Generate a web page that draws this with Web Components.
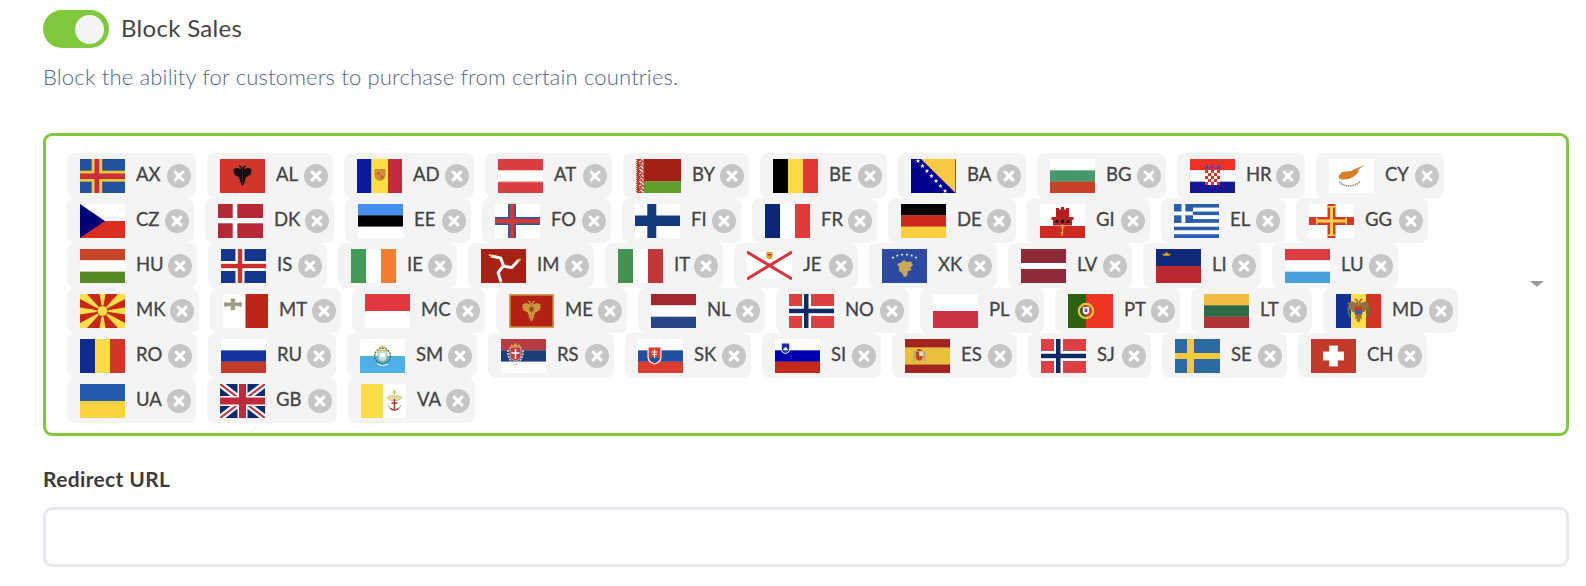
<!DOCTYPE html>
<html>
<head>
<meta charset="utf-8">
<title>Block Sales</title>
<style>
  html, body { margin: 0; background: #fff; font-family: Lato, "Liberation Sans", sans-serif; }
</style>
</head>
<body>
<block-sales-form></block-sales-form>

<script>
const rect = (x, y, w, h, c) => `<rect x="${x}" y="${y}" width="${w}" height="${h}" fill="${c}"/>`;
const hs = (...c) => c.map((k, i) => rect(0, i * 34 / c.length, 45, 34 / c.length + .2, k)).join('');
const vs = (...c) => c.map((k, i) => rect(i * 45 / c.length, 0, 45 / c.length + .2, 34, k)).join('');
const cross = (x, w, y, h, c) => rect(x, 0, w, 34, c) + rect(0, y, 45, h, c);
const star = (x, y, r, c = '#fff') => {
    let p = [];
    for (let i = 0; i < 10; i++) {
        const a = -Math.PI / 2 + i * Math.PI / 5, q = i % 2 ? r * .42 : r;
        p.push((x + q * Math.cos(a)).toFixed(2) + ',' + (y + q * Math.sin(a)).toFixed(2));
    }
    return `<polygon points="${p.join(' ')}" fill="${c}"/>`;
};
const nordicRed = rect(0, 0, 45, 34, '#dc4043') + cross(13, 9, 12, 10, '#fff') + cross(15, 4.5, 14.7, 4.5, '#0d2a66');

const checkers = () => {
    let s = rect(15, 11, 15, 15, '#fff');
    for (let r = 0; r < 5; r++) for (let c = 0; c < 5; c++) if ((r + c) % 2 === 0) s += rect(15 + c * 3, 11 + r * 3, 3, 3, '#e3312a');
    return s;
};
const leg = a => `<g transform="rotate(${a} 22.5 17)"><path d="M22.5 17 Q21 12 19.5 9 Q15 8 10 7" fill="none" stroke="#fff" stroke-width="3" stroke-linejoin="round"/><path d="M10.5 7 L8 5.6" stroke="#e8c44a" stroke-width="2"/></g>`;
// two-headed eagle, used for AL, ME and MD. One half, mirrored.
const eagleHalf = 'M0-7 L-1-9.5 L-3-10.5 L-3.6-9 L-2.2-8.5 L-1.6-6.5 L-3-7 L-5.5-8 L-9.5-6.5 L-8.5-5.2 L-9.5-4 L-8.3-3 L-9.2-1.8 L-7.5-1 L-8 0 L-5.8 0 L-5.5 1 L-3.5 1.5 L-3.3 3.5 L-2.4 4.5 L-3.2 7.5 L-1.6 6.5 L-1.6 9 L0 10.5Z';
const eagle = (c, x = 22.5, y = 17, k = 1) => `<g transform="translate(${x} ${y}) scale(${k})" fill="${c}"><path d="${eagleHalf}"/><path d="${eagleHalf}" transform="scale(-1 1)"/></g>`;
const shield = (x, y, w, h, c, stroke = 'none') => `<path d="M${x} ${y}h${w}v${h * .6}q0 ${h * .3} -${w / 2} ${h * .4}q-${w / 2} -${h * .1} -${w / 2} -${h * .4}z" fill="${c}" stroke="${stroke}" stroke-width=".8"/>`;

const FLAGS = {
    AX: rect(0, 0, 45, 34, '#21519f') + cross(11.7, 10.5, 11.7, 11, '#f7c73c') + cross(14.5, 4.7, 14.5, 5.5, '#c6303a'),
    AL: rect(0, 0, 45, 34, '#d2352c') + eagle('#111', 22.5, 16.5, .98),
    AD: rect(0, 0, 14.5, 34, '#0a1a9e') + rect(14.5, 0, 16.5, 34, '#fadf47') + rect(31, 0, 14, 34, '#c22b40') + shield(18, 10.5, 10, 11, '#d88b3a', '#b8842c') + rect(20, 13, 3, 3, '#c63') + rect(23.5, 16.5, 3, 3, '#c7524a'),
    AT: hs('#dc3d40', '#fff', '#dc3d40') + rect(0, 11, 45, .6, '#f3b5b5') + rect(0, 22.6, 45, .6, '#f3b5b5'),
    BY: rect(0, 0, 45, 22.5, '#a32114') + rect(0, 22.5, 45, 11.5, '#5f9e2c') + rect(0, 0, 7.5, 34, '#eee') + Array.from({ length: 34 }, (_, i) => rect(i % 2 ? 1 : 0, i, i % 3 ? 3 : 5, 1, '#c0392b') + rect(i % 4 + 3.5, i, 2, 1, '#c0392b')).join(''),
    BE: vs('#000', '#fadb45', '#e2383a'),
    BA: rect(0, 0, 45, 34, '#00008f') + '<polygon points="10,0 44.5,0 44.5,34" fill="#f9c940"/>' + [[7, 2], [11.5, 7], [16, 12], [20.5, 17], [25, 22], [29.5, 27], [34, 32]].map(p => star(p[0], p[1], 2.4)).join(''),
    BG: hs('#fff', '#46996a', '#c94026'),
    HR: hs('#ee3324', '#fff', '#171796') + rect(15, 6, 15, 4, '#2a5fb0') + rect(18, 6, 3, 4, '#e3312a') + rect(24, 6, 3, 4, '#e3312a') + checkers(),
    CY: rect(0, 0, 45, 34, '#fff') + '<path d="M9.5 17 L13 13 L18 12.5 L22 12 L26 10 L35.5 6 L29.5 10.5 L29 14 L25 17.5 L20 20 L14 20.5 L10.5 20Z" fill="#d57f27"/><path d="M10 23 Q20 31 31 23" fill="none" stroke="#8d9270" stroke-width="1.6" stroke-dasharray="1.6 .8"/>',
    CZ: hs('#fff', '#d92e20') + '<polygon points="0,0 25,17 0,34" fill="#01017a"/>',
    DK: rect(0, 0, 45, 34, '#b52834') + cross(14.7, 4.6, 14, 5.3, '#fff'),
    EE: hs('#438ff5', '#000', '#fff'),
    FO: rect(0, 0, 45, 34, '#fff') + cross(13, 8, 13, 8, '#2a58a8') + cross(14.7, 4.6, 14.7, 4.6, '#d23b33'),
    FI: rect(0, 0, 45, 34, '#fff') + cross(12.3, 9, 11.5, 10.5, '#133a7c'),
    FR: vs('#0a2779', '#fff', '#e4393c'),
    DE: hs('#000', '#cc2a1c', '#fbcf3f'),
    GI: rect(0, 0, 45, 22, '#fff') + rect(0, 22, 45, 12, '#cf2a22') + '<path d="M13 21.5 V16 H11.5 V13 H16 V4 H19 V5.5 H21 V3 H24 V5.5 H26 V4 H29 V13 H33.5 V16 H32 V21.5Z" fill="#b5201c"/><circle cx="17" cy="17.5" r="1.4" fill="#111"/><circle cx="22.5" cy="17.5" r="1.8" fill="#111"/><circle cx="28" cy="17.5" r="1.4" fill="#111"/><path d="M22.5 22 V31 M22.5 31 h-2 M22.5 28.5 h-2" stroke="#e0b03c" stroke-width="1.2" fill="none"/><circle cx="22.5" cy="22.5" r="1.6" fill="none" stroke="#e0b03c"/>',
    EL: Array.from({ length: 9 }, (_, i) => rect(0, i * 34 / 9, 45, 34 / 9, i % 2 ? '#fff' : '#2a5fae')).join('') + rect(0, 0, 19, 18.9, '#2a5fae') + rect(7.5, 0, 3.8, 18.9, '#fff') + rect(0, 7.5, 19, 3.8, '#fff'),
    GG: rect(0, 0, 45, 34, '#fff') + cross(18.5, 8, 13, 8, '#d23a30') + rect(21, 2, 3, 30, '#f8d548') + rect(7, 15.5, 31, 3, '#f8d548') + rect(18.5, 2, 8, 1.5, '#f8d548') + rect(18.5, 30.5, 8, 1.5, '#f8d548') + rect(7, 13.5, 1.5, 7, '#f8d548') + rect(36.5, 13.5, 1.5, 7, '#f8d548'),
    HU: hs('#c64428', '#fff', '#558a25'),
    IS: rect(0, 0, 45, 34, '#15388f') + cross(14.5, 9, 12, 10, '#fff') + cross(16.8, 4.4, 14.8, 4.4, '#cf2f2c'),
    IE: vs('#439a55', '#fff', '#f07f32'),
    IM: rect(0, 0, 45, 34, '#a82115') + leg(0) + leg(120) + leg(240),
    IT: vs('#40944f', '#fff', '#bf393c'),
    JE: rect(0, 3, 45, 27, '#fff') + '<path d="M0 3 L45 30 M45 3 L0 30" stroke="#d7333a" stroke-width="3"/>' + shield(19.5, 3, 6, 7.5, '#e0a030') + rect(20.5, 5, 4, 1.5, '#c8321e'),
    XK: rect(0, 0, 45, 34, '#2c4aa0') + '<path d="M15 15 L19 13.5 L22 11 L25 13 L29 12.5 L31 16 L28 19 L30 21 L26 22 L25 27 L22 28 L20 24 L17 22 L17 18Z" fill="#c9a857"/>' + [[11, 8.5], [15.3, 6.5], [20, 5.5], [25, 5.5], [29.7, 6.5], [34, 8.5]].map(p => star(p[0], p[1], 1.5)).join(''),
    LV: rect(0, 0, 45, 34, '#8e2a3a') + rect(0, 14, 45, 6, '#fff'),
    LI: hs('#0f2a7a', '#bb2a30') + '<path d="M7 7 L6.5 3.5 L8.5 5 L10.5 2.5 L12.5 5 L14.5 3.5 L14 7Z" fill="#d9b13f" stroke="#3a2a10" stroke-width=".6"/>',
    LU: hs('#dc3d43', '#fff', '#47a0dc'),
    MK: rect(0, 0, 45, 34, '#c8281c') + '<g fill="#fadf47"><polygon points="0,0 7,0 22.5,17 0,5"/><polygon points="45,0 38,0 22.5,17 45,5"/><polygon points="0,34 7,34 22.5,17 0,29"/><polygon points="45,34 38,34 22.5,17 45,29"/><polygon points="19.5,0 25.5,0 22.5,17"/><polygon points="19.5,34 25.5,34 22.5,17"/><polygon points="0,13.5 0,20.5 22.5,17"/><polygon points="45,13.5 45,20.5 22.5,17"/><circle cx="22.5" cy="17" r="5.4" stroke="#c8281c" stroke-width=".8"/></g>',
    MT: rect(0, 0, 22.5, 34, '#fff') + rect(22.5, 0, 22.5, 34, '#bd2519') + '<path d="M5 4 h4 l-.6 4 h3 l4-.6 v4 l-4-.6 h-3 l.6 4 h-4 l.6-4 h-3 l-4 .6 v-4 l4 .6 h3z" transform="translate(3 1)" fill="#9b9b90" stroke="#a5763e" stroke-width=".5"/>',
    MC: hs('#e2383f', '#fff'),
    ME: rect(0, 0, 45, 34, '#cda24e') + rect(1.6, 1.6, 41.8, 30.8, '#b52014') + eagle('#c9973f', 22.5, 17, 1) + shield(20.5, 13, 4, 5, '#9c4a1c'),
    NL: hs('#a02a2e', '#fff', '#2a4587'),
    NO: nordicRed,
    PL: hs('#fff', '#cb3346'),
    PT: rect(0, 0, 18, 34, '#2c6212') + rect(18, 0, 27, 34, '#ee3524') + '<circle cx="18" cy="17" r="7.2" fill="none" stroke="#e3c83a" stroke-width="2.2"/>' + shield(14.5, 12.5, 7, 8.5, '#fff', '#c8402c') + rect(16.6, 14.5, 2.8, 3.6, '#3f6cb8'),
    LT: hs('#f3bb40', '#2c6a48', '#ae3436'),
    MD: vs('#12309a', '#fadf47', '#cc3824') + eagle('#96703a', 22.5, 16.5, 1.15) + shield(19, 12.5, 7, 8.5, '#cc3824') + rect(19, 16.5, 7, 3.5, '#3a5fb0') + '<path d="M12.5 13 Q11.5 19 14.5 23 M32.5 13 Q33.5 19 30.5 23" stroke="#3f8a3a" stroke-width="1.4" fill="none"/>',
    RO: vs('#0f2d91', '#fadd45', '#cf3826'),
    RU: hs('#fff', '#1435a0', '#c33c2b'),
    SM: hs('#fff', '#4fb0e8') + '<circle cx="22.5" cy="17" r="7.8" fill="none" stroke="#2f7f4a" stroke-width="1.4" stroke-dasharray="2 1"/>' + shield(18, 11.5, 9, 11, '#bfe0f2', '#d0a73a') + rect(20, 14, 5, 4, '#fff') + '<path d="M19 9.5 h7 l-1 -2.5 -1.2 1.2 -1.3 -2 -1.3 2 -1.2-1.2z" fill="#d9a82e"/><path d="M17 25 Q22.5 28 28 25" stroke="#fff" stroke-width="1" fill="none"/>',
    RS: hs('#b83c44', '#1d3f78', '#fff') + shield(9, 8, 11, 14, '#c6363c', '#d9d4cf') + '<path d="M14.5 10 v10 M10.5 14 h8" stroke="#fff" stroke-width="1.6"/><path d="M9.5 8 l1-3 2 1.5 2-3 2 3 2-1.5 1 3z" fill="#c9a13b"/><path d="M7 11 Q6 20 14 26 Q23 20 22 11" fill="none" stroke="#ded6d0" stroke-width="1.6" stroke-dasharray="2 1"/>',
    SK: hs('#fff', '#20509f', '#dd3a30') + shield(9.5, 7.5, 14, 18, '#fff') + shield(10.6, 8.6, 11.8, 15.8, '#dd3a30') + '<path d="M16.5 10.5 v9 M13.5 13 h6 M14.2 15.5 h4.6" stroke="#fff" stroke-width="1.2"/><path d="M11.6 20 q2.5-3 5-1 q2.5-2 5 1 q-2 3-5 4 q-3-1-5-4z" fill="#20509f"/>',
    SI: hs('#fff', '#0000b4', '#c4291c') + shield(6, 4, 9, 11, '#fff') + shield(6.8, 4.5, 7.4, 9.5, '#1a2bb0') + '<path d="M7.8 10.5 L10.5 8 L13.2 10.5 Q10.5 12.5 7.8 10.5z" fill="#fff"/>',
    ES: rect(0, 0, 45, 8.5, '#a32522') + rect(0, 8.5, 45, 17, '#e8c03c') + rect(0, 25.5, 45, 8.5, '#a32522') + rect(0, 8.2, 45, .7, '#d17a2c') + rect(0, 25.2, 45, .7, '#d17a2c') + shield(10.5, 12.5, 7.5, 9.5, '#b5482c', '#d5a23a') + rect(14.2, 12.5, 3.8, 4.5, '#e8d9b5') + '<path d="M11 12 q3.2-4 6.6 0z" fill="#a9472a"/><path d="M9 12 v11 M19.5 12 v11" stroke="#b7a58f" stroke-width="1.5"/>',
    SJ: nordicRed,
    SE: rect(0, 0, 45, 34, '#2c6aa3') + cross(12, 7, 14, 6, '#f6ca3c'),
    CH: rect(0, 0, 45, 34, '#c43a2a') + rect(18, 6.5, 9, 21, '#f7d5d0') + rect(12, 12.5, 21, 9, '#f7d5d0') + rect(18.6, 7, 7.8, 20, '#fff') + rect(12.5, 13, 20, 8, '#fff'),
    UA: hs('#245aac', '#fbd341'),
    GB: rect(0, 0, 45, 34, '#0d2a6e') + '<path d="M0 0 L45 34 M45 0 L0 34" stroke="#fff" stroke-width="6.5"/><path d="M0 0 L45 34 M45 0 L0 34" stroke="#c22d3c" stroke-width="2"/>' + cross(17.5, 10, 12, 10, '#fff') + cross(19, 7, 13.5, 7, '#bd2a3a'),
    VA: rect(0, 0, 22.5, 34, '#fadf47') + rect(22.5, 0, 22.5, 34, '#fff') + '<path d="M26 14 Q27 11 33.5 12 Q40 11 41 14 L37 16.5 L30 16.5Z" fill="#e8dc96" stroke="#b0a890" stroke-width=".6"/><path d="M33.5 6 v5 M31.5 8 h4" stroke="#d5b842" stroke-width="1.2"/><path d="M33.5 15 v10 M29 24 q4.5 4 9 0 M30.5 19 h6" stroke="#a8322c" stroke-width="1.5" fill="none"/><path d="M27 21 l3 5 M40 21 l-3 5" stroke="#b9b3a0" stroke-width="1.1"/>'
};

class FlagIcon extends HTMLElement {
    connectedCallback() {
        this.attachShadow({ mode: 'open' }).innerHTML = `
            <style>
                :host { display: block; width: 45px; height: 34px; flex: none; }
                svg { display: block; }
            </style>
            <svg width="45" height="34" viewBox="0 0 45 34" aria-hidden="true">${FLAGS[this.getAttribute('code')] || ''}</svg>
        `;
    }
}

class CountryChip extends HTMLElement {
    connectedCallback() {
        const code = this.getAttribute('code');
        this.attachShadow({ mode: 'open' }).innerHTML = `
            <style>
                :host { display: flex; align-items: center; box-sizing: border-box; height: 45px; flex: none;
                        padding: 0 5px 0 13px; background: #f4f4f4; border-radius: 8px; }
                .label { margin-left: 11px; padding-bottom: 3px; font-size: 18.5px; font-weight: 400; color: #444;
                         -webkit-text-stroke: .3px #444; white-space: nowrap; }
                svg { margin-left: auto; flex: none; display: block; }
            </style>
            <flag-icon code="${code}"></flag-icon>
            <span class="label">${code}</span>
            <svg width="24" height="24" viewBox="0 0 24 24" aria-hidden="true">
                <circle cx="12" cy="12" r="12" fill="#c6c6c6"/>
                <path d="M8.2 8.2l7.6 7.6M15.8 8.2l-7.6 7.6" stroke="#fff" stroke-width="3.2" stroke-linecap="round"/>
            </svg>
        `;
        this.style.width = this.getAttribute('w') + 'px';
    }
}

// chip widths read off the reference, they depend on the label glyphs
const COUNTRIES = 'AX129 AL126 AD130 AT127 BY126 BE127 BA128 BG129 HR128 CY128 CZ127 DK129 EE126 FO129 FI119 FR125 DE128 GI123 EL124 GG132 HU130 IS119 IE119 IM126 IT118 JE124 XK128 LV124 LI118 LU126 MK132 MT131 MC133 ME131 NL127 NO133 PL124 PT125 LT121 MD135 RO130 RU128 SM130 RS126 SK126 SI119 ES125 SJ123 SE125 CH129 UA129 GB130 VA127'.split(' ');

class CountrySelect extends HTMLElement {
    connectedCallback() {
        const chips = COUNTRIES.map(c => `<country-chip code="${c.slice(0, 2)}" w="${c.slice(2)}"></country-chip>`).join('');
        this.attachShadow({ mode: 'open' }).innerHTML = `
            <style>
                :host { display: block; position: relative; box-sizing: border-box; height: 303px;
                        border: 3px solid #80c83c; border-radius: 9px; padding: 17px 66px 10px 21px; background: #fff; }
                .chips { display: flex; flex-wrap: wrap; column-gap: 11px; }
                .arrow { position: absolute; left: 1484px; top: 145px; width: 0; height: 0;
                         border-left: 7px solid transparent; border-right: 7px solid transparent; border-top: 6px solid #9a9a9a; }
            </style>
            <div class="chips">${chips}</div>
            <div class="arrow"></div>
        `;
    }
}

class ToggleSwitch extends HTMLElement {
    connectedCallback() {
        this.attachShadow({ mode: 'open' }).innerHTML = `
            <style>
                :host { display: flex; align-items: center; gap: 12px; }
                .track { display: flex; align-items: center; justify-content: flex-end; box-sizing: border-box;
                         width: 66px; height: 38px; padding-right: 5px; border-radius: 19px; background: #80c83c; }
                .knob { width: 29px; height: 29px; border-radius: 50%; background: #f4f4f4; }
                .text { font-size: 24px; letter-spacing: .3px; color: #444; position: relative; top: -2px; }
            </style>
            <div class="track"><div class="knob"></div></div>
            <div class="text"><slot></slot></div>
        `;
    }
}

class TextField extends HTMLElement {
    connectedCallback() {
        this.attachShadow({ mode: 'open' }).innerHTML = `
            <style>
                :host { display: block; }
                label { display: block; font-size: 21px; letter-spacing: .35px; font-weight: 700; line-height: 24px; color: #3c3c3c; margin-bottom: 16px; }
                input { display: block; width: 100%; height: 60px; box-sizing: border-box; border: 3px solid #e6e9ef; border-radius: 9px; background: #fff; outline: none; }
            </style>
            <label><slot></slot></label>
            <input type="text">
        `;
    }
}

class BlockSalesForm extends HTMLElement {
    connectedCallback() {
        this.attachShadow({ mode: 'open' }).innerHTML = `
            <style>
                :host { display: block; box-sizing: border-box; width: 1586px; height: 586px; padding: 10px 17px 0 43px; overflow: hidden; }
                .desc { margin: 17px 0 0; font-size: 22px; letter-spacing: .18px; font-weight: 300; line-height: 24px; color: #4f6890; }
                country-select { margin-top: 44px; }
                text-field { margin-top: 31px; }
            </style>
            <toggle-switch>Block Sales</toggle-switch>
            <p class="desc">Block the ability for customers to purchase from certain countries.</p>
            <country-select></country-select>
            <text-field>Redirect URL</text-field>
        `;
    }
}

customElements.define('flag-icon', FlagIcon);
customElements.define('country-chip', CountryChip);
customElements.define('country-select', CountrySelect);
customElements.define('toggle-switch', ToggleSwitch);
customElements.define('text-field', TextField);
customElements.define('block-sales-form', BlockSalesForm);
</script>
</body>
</html>
